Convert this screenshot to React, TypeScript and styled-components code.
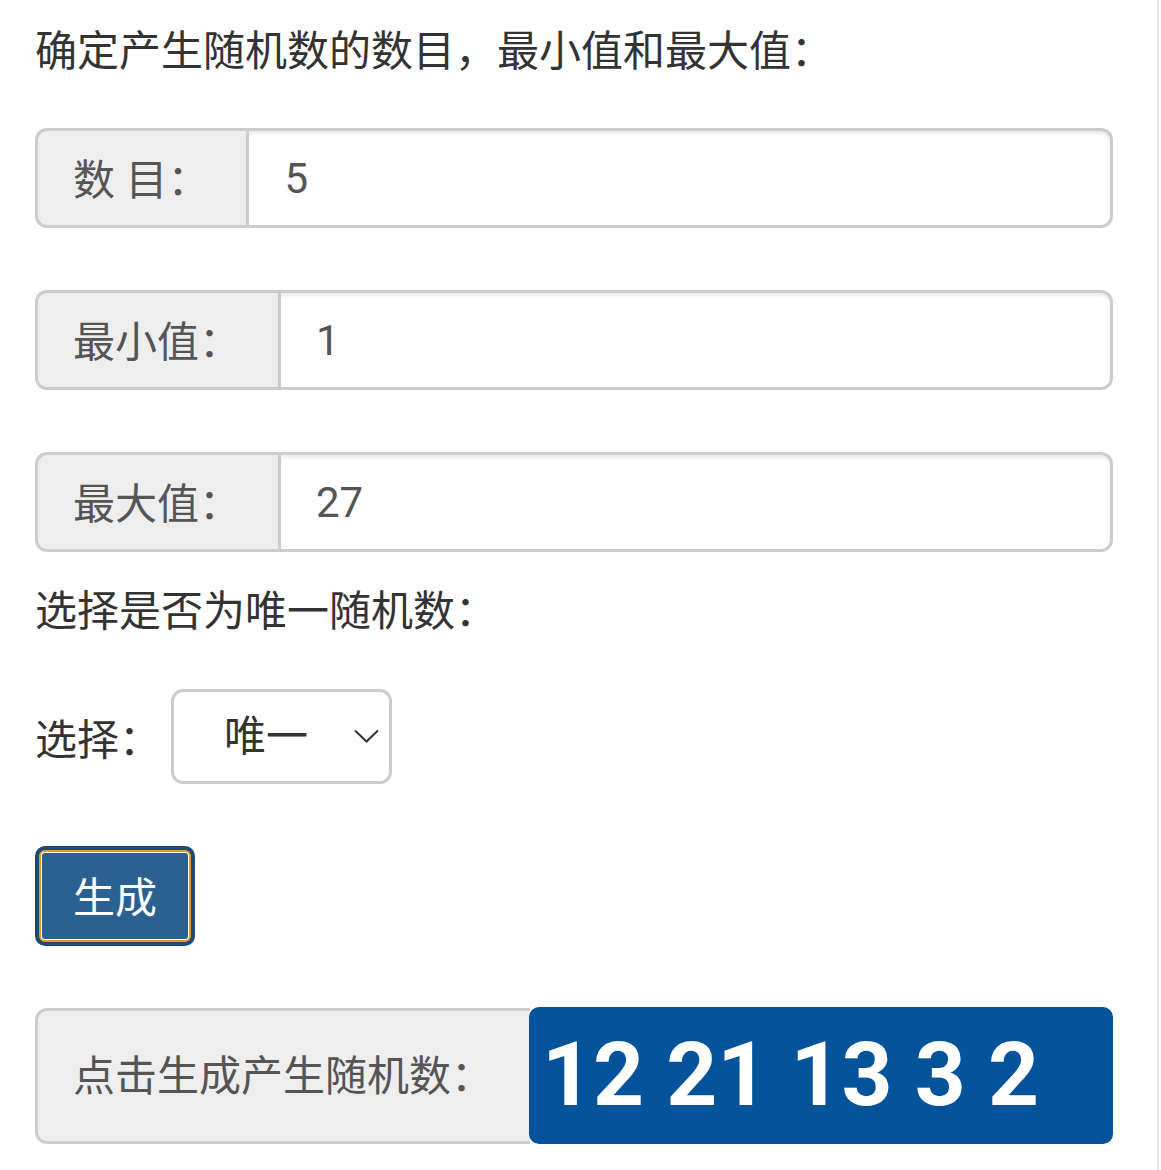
import React from "react";
import styled, { createGlobalStyle } from "styled-components";

const GlobalStyle = createGlobalStyle`
  body {
    margin: 0;
    background: #fff;
    font-family: Roboto, "Noto Sans CJK SC", sans-serif;
  }
`;

const Page = styled.div`
  width: 1159px;
  min-height: 1170px;
  box-sizing: border-box;
  border-right: 2px solid #e4e4e4;
  padding: 22px 0 0 35px;
`;

const Column = styled.div`
  width: 1078px;
  display: flex;
  flex-direction: column;
`;

const Heading = styled.p<{ gap: number }>`
  margin: 0 0 ${(p) => p.gap}px;
  font-size: 42px;
  line-height: 60px;
  color: #333;
`;

const InputGroup = styled.div<{ gap: number }>`
  display: flex;
  height: 100px;
  margin-bottom: ${(p) => p.gap}px;
`;

const Addon = styled.span`
  display: flex;
  align-items: center;
  box-sizing: border-box;
  padding: 0 37px 4px 35px;
  background: #eee;
  border: 3px solid #ccc;
  border-right: 0;
  border-radius: 12px 0 0 12px;
  font-size: 42px;
  color: #555;
  white-space: pre;
`;

const Field = styled.input`
  flex: 1;
  min-width: 0;
  box-sizing: border-box;
  padding: 0 35px;
  border: 3px solid #ccc;
  border-radius: 0 12px 12px 0;
  background: #fff;
  box-shadow: inset 0 3px 3px rgba(0, 0, 0, 0.075);
  font-family: Roboto, "Noto Sans CJK SC", sans-serif;
  font-size: 42px;
  color: #555;
  outline: none;
`;

const SelectRow = styled.div`
  display: flex;
  align-items: center;
  gap: 10px;
  font-size: 42px;
  color: #333;
`;

const SelectWrap = styled.div`
  position: relative;
  width: 221px;
  height: 95px;
`;

const Select = styled.select`
  appearance: none;
  width: 100%;
  height: 100%;
  box-sizing: border-box;
  padding: 0 0 0 50px;
  border: 3px solid #ccc;
  border-radius: 12px;
  background: #fff;
  font-family: Roboto, "Noto Sans CJK SC", sans-serif;
  font-size: 42px;
  color: #333;
  outline: none;
`;

const Chevron = styled.svg`
  position: absolute;
  right: 13px;
  top: 40px;
  pointer-events: none;
`;

const GenerateButton = styled.button`
  width: 160px;
  height: 100px;
  margin-top: 62px;
  box-sizing: border-box;
  border: 4px solid #1d4b73;
  border-radius: 10px;
  background: #2b6190;
  box-shadow: inset 0 0 0 2px #e79b16, inset 0 0 0 3px #fff;
  color: #fff;
  font-family: Roboto, "Noto Sans CJK SC", sans-serif;
  font-size: 42px;
  padding: 0 0 4px;
  cursor: pointer;
`;

const ResultGroup = styled.div`
  display: flex;
  height: 136px;
  margin-top: 62px;
`;

const ResultLabel = styled.span`
  display: flex;
  align-items: center;
  width: 495px;
  box-sizing: border-box;
  padding: 0 0 7px 35px;
  background: #eee;
  border: 3px solid #ccc;
  border-right: 0;
  border-radius: 12px 0 0 12px;
  font-size: 42px;
  color: #555;
`;

const ResultValue = styled.span`
  flex: 1;
  display: flex;
  align-items: center;
  margin: -1px 0 0 -1px;
  padding: 0 0 2px 13px;
  background: #02539a;
  border-radius: 10px;
  color: #fff;
  font-family: Roboto, sans-serif;
  font-weight: 700;
  font-size: 89px;
  white-space: pre;
`;

const fields = [
  { label: "数 目：", value: "5" },
  { label: "最小值：", value: "1" },
  { label: "最大值：", value: "27" },
];

const App: React.FC = () => {
  return (
    <Page>
      <GlobalStyle />
      <Column>
        <Heading gap={46}>确定产生随机数的数目，最小值和最大值：</Heading>
        {fields.map((f, i) => (
          <InputGroup key={f.label} gap={i === fields.length - 1 ? 30 : 62}>
            <Addon>{f.label}</Addon>
            <Field defaultValue={f.value} />
          </InputGroup>
        ))}
        <Heading gap={47}>选择是否为唯一随机数：</Heading>
        <SelectRow>
          <span>选择：</span>
          <SelectWrap>
            <Select defaultValue="unique">
              <option value="unique">唯一</option>
              <option value="repeat">可重复</option>
            </Select>
            <Chevron width="25" height="14" viewBox="0 0 25 14">
              <path d="M1 1.5 L12.5 12.5 L24 1.5" fill="none" stroke="#333" strokeWidth="2" />
            </Chevron>
          </SelectWrap>
        </SelectRow>
        <div>
          <GenerateButton>生成</GenerateButton>
        </div>
        <ResultGroup>
          <ResultLabel>点击生成产生随机数：</ResultLabel>
          <ResultValue>12 21 13 3 2</ResultValue>
        </ResultGroup>
      </Column>
    </Page>
  );
};

export default App;
